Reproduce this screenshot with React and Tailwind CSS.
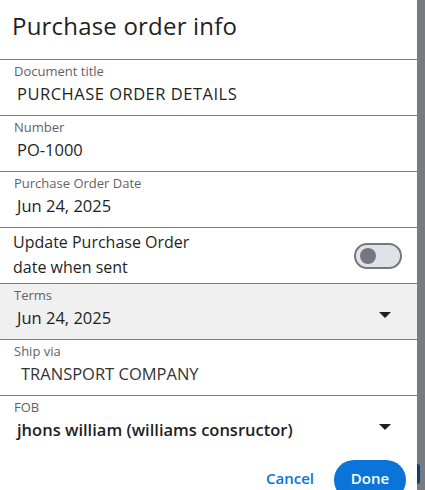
import React from 'react'

function Caret() {
  return (
    <svg width="12" height="6" viewBox="0 0 12 6" className="shrink-0">
      <path d="M0 0h12L6 6z" fill="#1f1f1f" />
    </svg>
  )
}

function Field({ label, value, valueClass = 'pl-[17px]', shaded, dropdown, border = true, bold }) {
  return (
    <div
      className={`h-14 shrink-0 flex items-start pr-[26px] ${border ? 'border-b border-[#7a7d84]' : ''} ${shaded ? 'bg-[#f0f0f0]' : 'bg-white'}`}
    >
      <div className="flex-1 pt-[3px]">
        <div className="pl-[14px] text-[13px] leading-4 text-[#5f6368]">{label}</div>
        <div
          className={`${valueClass} mt-[5px] text-[16.5px] leading-5 text-[#1f1f1f] ${bold ? 'font-semibold' : ''}`}
        >
          {value}
        </div>
      </div>
      {dropdown && (
        <div className="pt-[28px]">
          <Caret />
        </div>
      )}
    </div>
  )
}

export default function App() {
  return (
    <div
      className="w-[425px] h-[490px] overflow-hidden flex bg-[#787b82]"
      style={{ fontFamily: '"Open Sans", Roboto, sans-serif' }}
    >
      <div className="w-[417px] shrink-0 bg-white flex flex-col">
        <div className="h-[60px] shrink-0 border-b border-[#7a7d84] pl-[12px] flex items-center pb-[8px]">
          <h1 className="text-[24px] text-[#1f1f1f] leading-7 tracking-[0.2px]">Purchase order info</h1>
        </div>

        <Field
          label="Document title"
          value="PURCHASE ORDER DETAILS"
          valueClass="pl-[17px] tracking-[0.5px]"
        />
        <Field label="Number" value="PO-1000" />
        <Field label="Purchase Order Date" value="Jun 24, 2025" />

        <div className="h-14 shrink-0 border-b border-[#7a7d84] flex items-center justify-between pl-[13px] pr-[15px]">
          <div className="text-[16px] leading-[25px] text-[#1f1f1f] pb-[2px]">
            Update Purchase Order
            <br />
            date when sent
          </div>
          <div className="w-[48px] h-[26px] rounded-full border-2 border-[#74777f] bg-[#e1e2e8] flex items-center pl-[4px]">
            <div className="w-[16px] h-[16px] rounded-full bg-[#74777f]" />
          </div>
        </div>

        <Field label="Terms" value="Jun 24, 2025" shaded dropdown />
        <Field label="Ship via" value="TRANSPORT COMPANY" valueClass="pl-[21px] text-[#333]" />
        <Field
          label="FOB"
          value="jhons william (williams consructor)"
          dropdown
          border={false}
          bold
        />

        <div className="shrink-0 flex justify-end items-start gap-4 pr-[11px] pt-[8px]">
          <span className="mt-[8px] px-1 text-[15px] leading-5 font-semibold text-[#0b74d8]">Cancel</span>
          <span className="h-10 w-[72px] pt-[8px] text-center rounded-full bg-[#0b74d8] text-white text-[15px] leading-5 font-semibold">
            Done
          </span>
        </div>
      </div>
      <div className="flex-1 flex flex-col justify-end pb-[6px]">
        <div className="w-[3px] h-[20px] rounded-r bg-[#0b3f73]" />
      </div>
    </div>
  )
}
